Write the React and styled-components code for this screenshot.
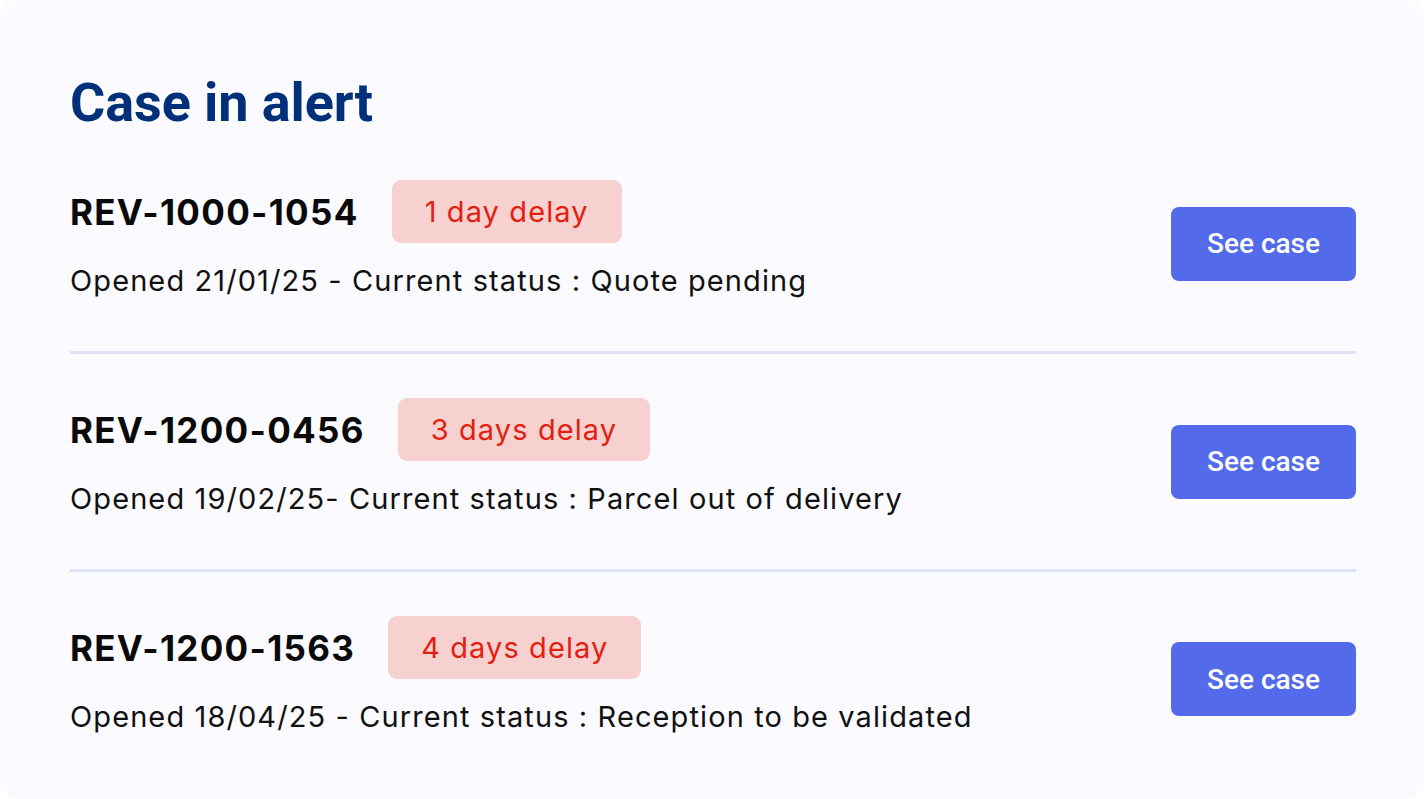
import React from "react";
import styled, { createGlobalStyle } from "styled-components";

const Global = createGlobalStyle`
  html, body { margin: 0; padding: 0; background: #ffffff; }
  body { font-family: Inter, "Noto Sans", sans-serif; }
  * { box-sizing: border-box; }
`;

const Card = styled.section`
  width: 1424px;
  height: 799px;
  background: #fafaff;
  border-radius: 18px;
  padding: 70px 68px 0 70px;
  overflow: hidden;
`;

const Title = styled.h1`
  margin: 0;
  font-family: Roboto, "Liberation Sans", sans-serif;
  font-weight: 700;
  font-size: 54px;
  line-height: 66px;
  color: #00307a;
  letter-spacing: -0.1px;
`;

const List = styled.div`
  display: flex;
  flex-direction: column;
`;

const Row = styled.div`
  display: flex;
  align-items: center;
  justify-content: space-between;
  height: ${(p) => (p.$last ? "214px" : "218px")};
  border-bottom: ${(p) => (p.$last ? "none" : "3px solid #dfe3f7")};
`;

const Info = styled.div`
  align-self: stretch;
  display: flex;
  flex-direction: column;
  gap: 21px;
  padding-top: 44px;
`;

const Head = styled.div`
  display: flex;
  align-items: center;
  gap: 33px;
`;

const CaseId = styled.span`
  font-family: Inter, sans-serif;
  font-weight: 700;
  font-size: 35px;
  letter-spacing: 1.3px;
  color: #0a0a0a;
`;

const Badge = styled.span`
  display: inline-flex;
  align-items: center;
  justify-content: center;
  height: 63px;
  padding: 0 33px;
  border-radius: 9px;
  background: #f7d1cf;
  color: #e3200f;
  font-family: Inter, sans-serif;
  font-size: 29px;
  letter-spacing: 1.1px;
  font-weight: 400;
`;

const Meta = styled.p`
  margin: 0;
  font-family: Inter, sans-serif;
  font-size: 29px;
  letter-spacing: 1.1px;
  line-height: 34px;
  color: #111111;
`;

const Button = styled.button`
  width: 185px;
  height: 74px;
  border: none;
  border-radius: 8px;
  background: #536bea;
  color: #ffffff;
  font-family: Roboto, "Liberation Sans", sans-serif;
  font-weight: 500;
  font-size: 28px;
  cursor: pointer;
`;

const cases = [
  { id: "REV-1000-1054", delay: "1 day delay", meta: "Opened 21/01/25 - Current status : Quote pending" },
  { id: "REV-1200-0456", delay: "3 days delay", meta: "Opened 19/02/25- Current status : Parcel out of delivery" },
  { id: "REV-1200-1563", delay: "4 days delay", meta: "Opened 18/04/25 - Current status : Reception to be validated" },
];

export default function App() {
  return (
    <>
      <Global />
      <Card>
        <Title>Case in alert</Title>
        <List>
          {cases.map((c, i) => (
            <Row key={c.id} $last={i === cases.length - 1}>
              <Info>
                <Head>
                  <CaseId>{c.id}</CaseId>
                  <Badge>{c.delay}</Badge>
                </Head>
                <Meta>{c.meta}</Meta>
              </Info>
              <Button>See case</Button>
            </Row>
          ))}
        </List>
      </Card>
    </>
  );
}
